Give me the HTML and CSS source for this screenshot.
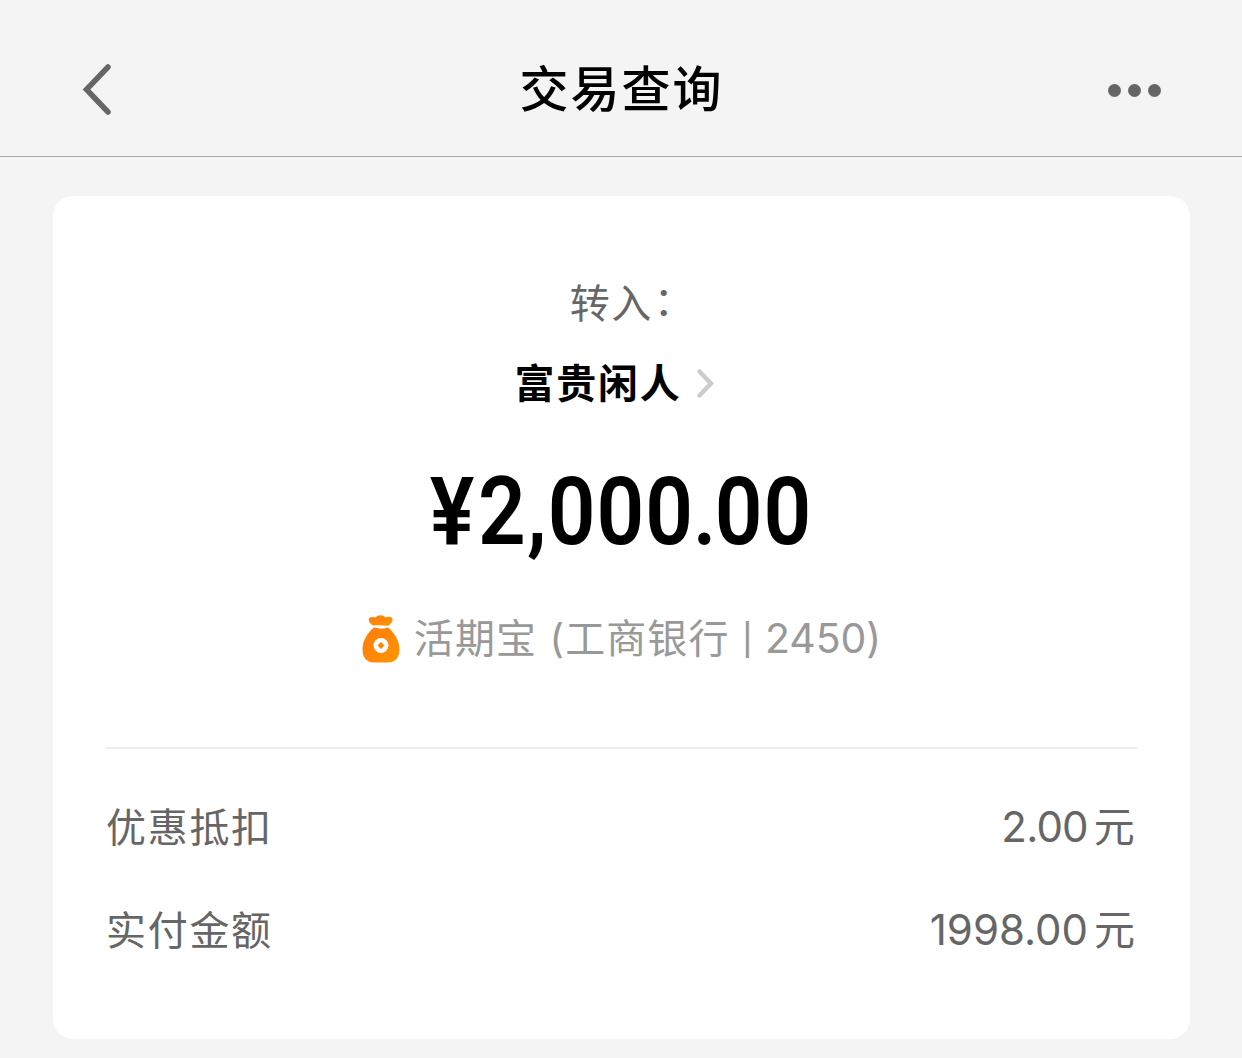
FILE: index.html
```html
<!DOCTYPE html>
<html lang="zh-CN">
<head>
    <meta charset="UTF-8">
    <meta name="viewport" content="width=device-width, initial-scale=1.0">
    <title>交易查询</title>
    <link rel="stylesheet" href="styles.css">
</head>
<body>
    <header class="navbar">
        <svg class="back-icon" viewBox="0 0 32 54" fill="none" stroke="#666" stroke-width="5.5" stroke-linecap="round" stroke-linejoin="miter">
            <path d="M27 5 L5.500 27.500 L27 50"/>
        </svg>
        <h1 class="title">交易查询</h1>
        <div class="more">
            <span class="dot"></span>
            <span class="dot"></span>
            <span class="dot"></span>
        </div>
    </header>

    <main class="card">
        <div class="label">转入<span class="colon">：</span></div>
        <div class="payee">
            <span class="payee-name">富贵闲人</span>
            <svg class="arrow-icon" viewBox="0 0 20 32" fill="none" stroke="#ccc" stroke-width="4.5" stroke-linecap="round">
                <path d="M4.500 4.500 L16 16.500 L4.500 28.500"/>
            </svg>
        </div>
        <div class="amount"><span class="currency">¥</span>2,000<span class="point">.</span>00</div>
        <div class="account">
            <svg class="bag-icon" viewBox="0 0 38 48">
                <defs>
                    <linearGradient id="bag" x1="0" y1="0" x2="1" y2="1">
                        <stop offset="0" stop-color="#ff7a0d"/>
                        <stop offset="1" stop-color="#ff9600"/>
                    </linearGradient>
                </defs>
                <path fill="url(#bag)" d="M11 10.500 C7 8 5.500 4 8 2.600 C9.800 1.500 12 2 13.500 2.500 C16 -.5 21 -.5 23.500 2.500 C26 1.500 29 1.500 30.300 3.500 C31.500 6 28.500 9 26.500 10.800 C21 10 16 10 11 10.500 Z"/>
                <path fill="url(#bag)" d="M12 12.500 C17 14 22 14 26 12.500 C31.500 17 37.500 25 37.500 34 C37.500 42 34 47.500 26 47.500 H12 C4 47.500 .5 42 .5 34 C.5 25 6.500 17 12 12.500 Z"/>
                <circle cx="19" cy="30.500" r="7.500" fill="#fff"/>
                <path fill="#ff8300" stroke="#ff8300" stroke-linejoin="round" d="M19 27.500 L22 30.500 L19 33.500 L16 30.500 Z"/>
            </svg>
            <span class="account-text">活期宝 (工商银行<span class="account-no"> <span class="bar">|</span> 2450)</span></span>
        </div>

        <div class="details">
            <div class="row">
                <span>优惠抵扣</span>
                <span class="value discount">2.00<span class="unit">元</span></span>
            </div>
            <div class="row">
                <span>实付金额</span>
                <span class="value">1998.00<span class="unit">元</span></span>
            </div>
        </div>
    </main>
</body>
</html>
```
FILE: styles.css
```css
* {
    box-sizing: border-box;
}

body {
    margin: 0;
    background: #f4f4f4;
    color: #666;
    font-family: Inter, "Noto Sans CJK SC", sans-serif;
    font-size: 40px;
    height: 1058px;
    overflow: hidden;
}

.navbar {
    display: flex;
    justify-content: space-between;
    align-items: center;
    height: 157px;
    padding: 24px 81px 0 81px;
    border-bottom: 1px solid #a9a9a9;
}

.back-icon {
    width: 32px;
    height: 54px;
    margin: 0 22px 2px 0;
}

.title {
    margin: 0;
    color: #000;
    font-size: 49px;
    font-weight: 500;
    line-height: 60px;
    letter-spacing: 2px;
}

.more {
    display: flex;
    gap: 7px;
}

.dot {
    width: 13px;
    height: 13px;
    border-radius: 50%;
    background: #666;
}

.card {
    display: flex;
    flex-direction: column;
    align-items: center;
    width: 1137px;
    height: 843px;
    margin: 39px 0 0 53px;
    padding: 78px 53px 0 53px;
    background: #fff;
    border-radius: 20px;
}

.label {
    line-height: 60px;
    letter-spacing: 1.5px;
    padding-left: 22px;
    white-space: nowrap;
}

.colon {
    margin-left: 1px;
    vertical-align: 3px;
    line-height: 1;
}

.payee {
    display: flex;
    align-items: center;
    gap: 14px;
    height: 60px;
    margin-top: 19px;
    margin-right: 13px;
}

.payee-name {
    color: #000;
    font-weight: 700;
    letter-spacing: 1.7px;
    padding-bottom: 5px;
}

.arrow-icon {
    width: 20px;
    height: 32px;
}

.amount {
    height: 110px;
    color: #000;
    font-family: Roboto, sans-serif;
    font-size: 94px;
    font-weight: 600;
    line-height: 110px;
    letter-spacing: 1.2px;
    margin-top: 44px;
    white-space: nowrap;
    transform: scaleX(0.89);
}

.currency {
    margin-right: 3px;
}

.point {
    font-size: 76px;
    font-weight: 900;
    line-height: 1;
    letter-spacing: 0;
}

.account {
    display: flex;
    align-items: center;
    gap: 14px;
    height: 60px;
    margin-top: 42px;
    color: #999;
}

.bag-icon {
    width: 38px;
    height: 48px;
}

.account-text {
    letter-spacing: 1.1px;
    white-space: nowrap;
    padding-bottom: 6px;
}

.account-no {
    font-size: 41px;
    letter-spacing: -0.1px;
}

.bar {
    font-size: 31px;
    font-weight: 500;
    vertical-align: 2px;
    margin: 0 1px;
}

.details {
    width: 1031px;
    margin-top: 78px;
    padding-top: 49px;
    border-top: 2px solid #eee;
}

.row {
    display: flex;
    justify-content: space-between;
    height: 60px;
    margin-bottom: 43px;
    line-height: 60px;
    letter-spacing: 1.7px;
}

.value {
    font-size: 42px;
    letter-spacing: 0;
    line-height: 58px;
    padding-right: 2px;
}

.discount {
    letter-spacing: -0.8px;
    padding-right: 3px;
}

.unit {
    font-size: 41px;
    margin-left: 6px;
}
```
